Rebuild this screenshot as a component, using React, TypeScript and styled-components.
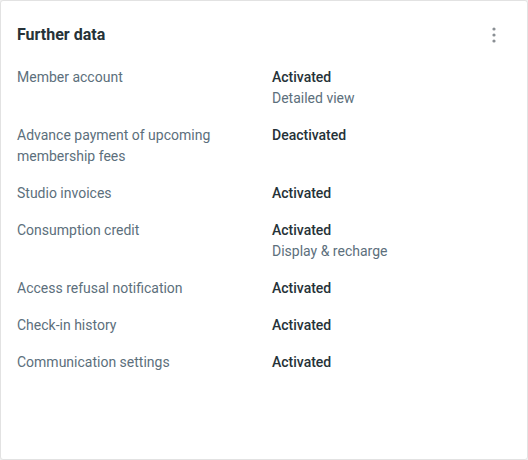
import { Fragment } from "react"
import styled, { createGlobalStyle } from "styled-components"

interface DataRow {
  label: string
  value: string
  link?: string
}

const ROWS: DataRow[] = [
  { label: "Member account", value: "Activated", link: "Detailed view" },
  { label: "Advance payment of upcoming membership fees", value: "Deactivated" },
  { label: "Studio invoices", value: "Activated" },
  { label: "Consumption credit", value: "Activated", link: "Display & recharge" },
  { label: "Access refusal notification", value: "Activated" },
  { label: "Check-in history", value: "Activated" },
  { label: "Communication settings", value: "Activated" },
]

const GlobalStyle = createGlobalStyle`
  html, body {
    margin: 0;
    padding: 0;
    background: #f0f0f0;
  }
  body {
    font-family: Roboto, "Liberation Sans", sans-serif;
    -webkit-font-smoothing: antialiased;
  }
`

const Card = styled.section`
  box-sizing: border-box;
  width: 528px;
  height: 460px;
  background: #ffffff;
  border: 1px solid #e2e2e2;
  border-radius: 3px;
  padding: 23px 16px 0 16px;
`

const Header = styled.header`
  display: flex;
  align-items: center;
  justify-content: space-between;
  height: 22px;
  margin-bottom: 21px;
`

const Title = styled.h2`
  margin: 0;
  font-size: 16px;
  font-weight: 700;
  color: #263238;
  line-height: 22px;
`

const MenuButton = styled.button`
  display: flex;
  align-items: center;
  justify-content: center;
  width: 24px;
  height: 24px;
  padding: 0;
  margin-right: 5px;
  border: none;
  background: none;
  color: #8a8f94;
  cursor: pointer;
`

const List = styled.dl`
  margin: 0;
  display: grid;
  grid-template-columns: 255px 1fr;
  row-gap: 16px;
`

const Label = styled.dt`
  margin: 0;
  font-size: 14px;
  line-height: 21px;
  color: #5c6f7c;
  padding-right: 20px;
`

const Value = styled.dd`
  margin: 0;
  display: flex;
  flex-direction: column;
  font-size: 14px;
  line-height: 21px;
`

const Status = styled.span`
  font-weight: 500;
  color: #263238;
`

const ValueLink = styled.a`
  color: #5c6f7c;
  text-decoration: none;
  cursor: pointer;
`

function KebabIcon() {
  return (
    <svg width='4' height='16' viewBox='0 0 4 16' fill='currentColor'>
      <circle cx='2' cy='2' r='1.6' />
      <circle cx='2' cy='8' r='1.6' />
      <circle cx='2' cy='14' r='1.6' />
    </svg>
  )
}

export default function App() {
  return (
    <>
      <GlobalStyle />
      <Card>
        <Header>
          <Title>Further data</Title>
          <MenuButton aria-label='More options'>
            <KebabIcon />
          </MenuButton>
        </Header>
        <List>
          {ROWS.map((row) => (
            <Fragment key={row.label}>
              <Label>{row.label}</Label>
              <Value>
                <Status>{row.value}</Status>
                {row.link && <ValueLink>{row.link}</ValueLink>}
              </Value>
            </Fragment>
          ))}
        </List>
      </Card>
    </>
  )
}
